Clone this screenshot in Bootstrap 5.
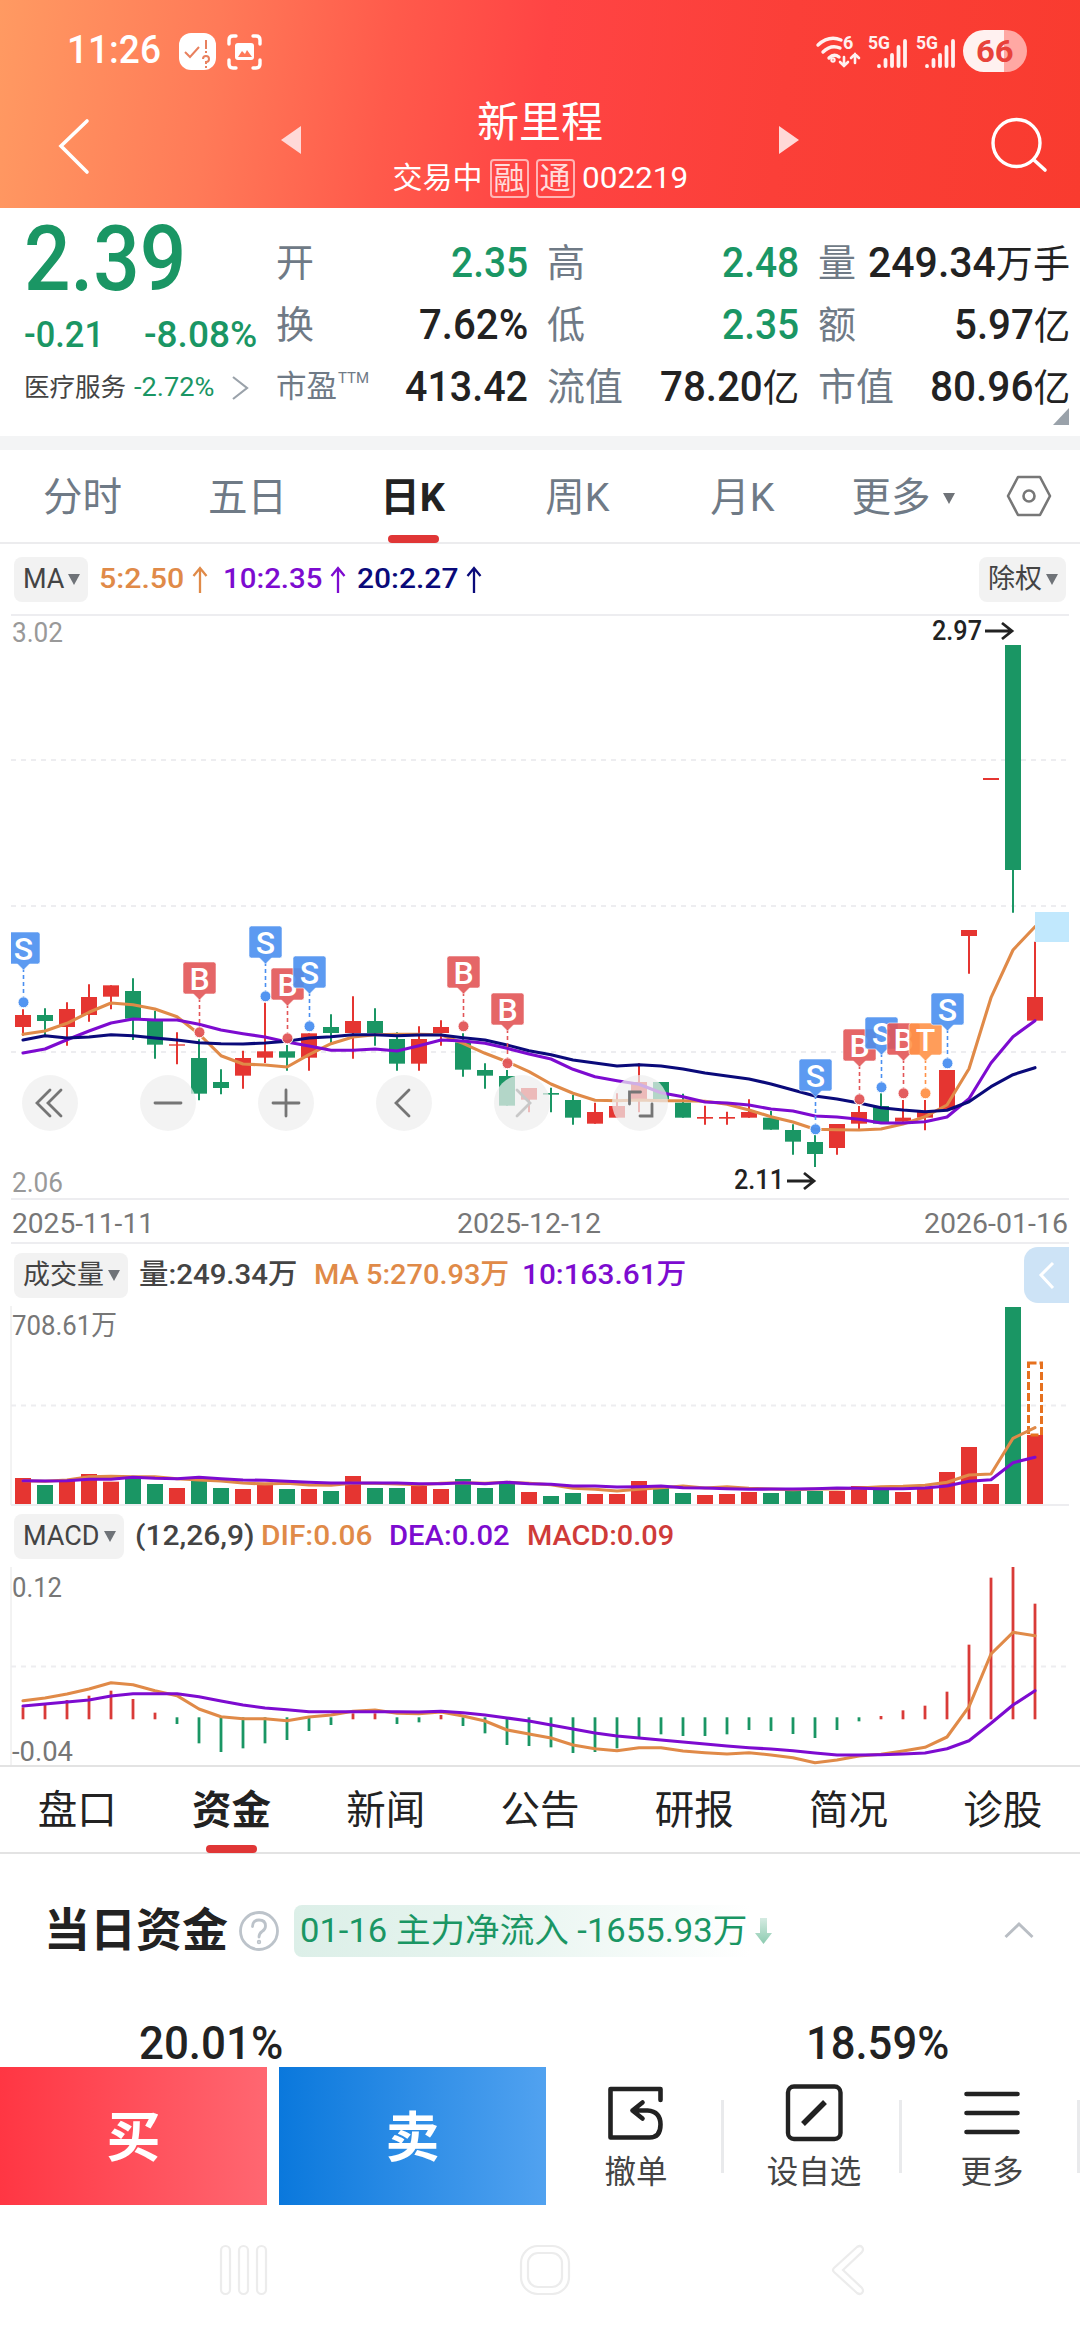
<!DOCTYPE html>
<html lang="zh-CN">
<head>
<meta charset="utf-8">
<meta name="viewport" content="width=device-width, initial-scale=1">
<title>新里程 002219</title>
<link href="https://cdn.jsdelivr.net/npm/bootstrap@5.3.0/dist/css/bootstrap.min.css" rel="stylesheet">
<style>
:root{--up:#e53531;--down:#1a9664;--ink:#222;--slate:#6f7a86;--ma5:#e08a48;--ma10:#7d0bd0;--ma20:#0a0a7a}
body{width:1080px;height:2340px;overflow:hidden;background:#fff;color:var(--ink);font-family:Roboto,"Noto Sans CJK SC",sans-serif;line-height:1}
svg{display:block;flex:none}
.fit{display:inline-block;white-space:nowrap;flex:none}
.fit>span{display:inline-block;transform-origin:0 50%}
.t-down{color:var(--down)}.t-up{color:#cf3b39}.t-slate{color:var(--slate)}
.t-5{color:var(--ma5)}.t-10{color:var(--ma10)}.t-20{color:var(--ma20)}
.topbar{height:208px;background:linear-gradient(97deg,#ff9a62 0%,#ff7a58 20%,#ff5a4b 36%,#ff4444 50%,#fb3f38 72%,#f93b2f 100%);color:#fff}
.status{height:101px;padding:0 53px 0 67px}
.clock{font-size:39px;font-weight:500}
.battery{width:64px;height:42px;border-radius:21px;background:linear-gradient(90deg,#fff1f0 64%,#ffa8a3 64%);color:#e8423b;font-size:32px;font-weight:700;margin-left:6px}
.titlebar{height:107px}
.side{width:340px}
.stock{font-size:42px;line-height:44px}
.substock{font-size:30px;height:40px;margin-top:13px;gap:7px}
.boxed{width:39px;height:39px;border:2px solid rgba(255,255,255,.6);border-radius:4px;font-size:31px;color:rgba(255,255,255,.82);line-height:35px;text-align:center}
.quote{height:228px;padding:16px 10px 0 24px}
.big{font-size:91px;font-weight:500;line-height:70px;height:70px}
.chg{font-size:37px;font-weight:500;height:37px;margin-top:22px}
.chg .pct{margin-left:40px}
.sector{font-size:25.5px;height:30px;margin-top:20px;color:#444}
.sector svg{margin-left:17px}
.summary{width:252px}
.grid3{column-gap:19px;padding-top:8px}
.qcol{width:252px}
.qrow{height:62px;font-size:38px}
.qrow .v{font-size:42px;font-weight:500}
.v i{font-style:normal;font-size:38px;font-weight:400}
.pe-ttm{font-size:30.5px}.pe-ttm sup{font-size:15px;top:-.9em;margin-left:1px}
.strip{height:14px;background:#f3f4f5}
.tabs{height:94px;border-bottom:2px solid #ececee;font-size:39.5px;color:var(--slate)}
.tabcell{width:165px;position:relative;padding-top:4px}
.tabcell.more{padding-right:9px;gap:12px}
.on{color:var(--ink);font-weight:700}
.on::after{content:"";position:absolute;bottom:-1px;left:50%;margin-left:-25px;width:51px;height:8px;border-radius:4px;background:#e03636}
.tri{width:0;height:0;border:6.5px solid transparent;border-top:11px solid #6f7378;border-bottom:0}
.legend-row{font-size:28.5px;padding:0 14px;height:62px}
.legend-row.ma{height:70px}
.legend-row.osc{height:61px}
.chip{height:45px;border-radius:8px;background:#f2f2f2;color:#444;font-size:27px;padding:0 8px 0 9px;gap:4px}
.lg{font-weight:500}
.lg.dark{color:#444}
.arr{color:var(--ma5);overflow:visible}.arr.t-10{color:var(--ma10)}.arr.t-20{color:var(--ma20)}
.g1{margin-left:11px}.g2{margin-left:17px}.g3{margin-left:13px}.g4{margin-left:6px}
.peek{position:absolute;right:11px;top:3px;width:45px;height:56px;border-radius:14px 0 0 14px;background:#cde3f6}
.tabs2{height:87px;border-bottom:2px solid #e3e3e3;font-size:39.5px}
.tabs2 .tabcell{width:14.2857%;padding-top:2px}
.fund{height:149px;padding:4px 46px 0 44px}
.fund h2{font-size:46px;font-weight:700;margin:0;width:184px;white-space:nowrap}
.help{margin-left:11px}
.flow{height:52px;margin-left:15px;padding-left:6px;border-radius:8px;font-size:33.5px;width:480px;background:linear-gradient(90deg,#dcefe8 0%,#e8f5f0 45%,#fff 95%)}
.shares{height:64px;font-size:46px;font-weight:500;color:#222;padding:17px 131px 0 139px}
.trade{height:138px}
.btn-trade{width:267px;border:0;border-radius:0;color:#fff!important;font-size:54px;font-weight:700;padding:5px 0 0}
.buy{background:linear-gradient(90deg,#ff3643,#ff6771)}
.sell{background:linear-gradient(90deg,#0a78dc,#51a2f0);margin-left:12px}
.act{width:178px;font-size:31.5px;color:#444;position:relative;padding-left:2px}
.act::after{content:"";position:absolute;right:0;top:33px;width:3px;height:73px;background:#e9eaec}
.act svg{margin-top:14px}
.act span{margin-top:14px}
.sysnav{height:135px}
</style>
</head>
<body>
<header class="topbar">
  <div class="status d-flex align-items-center">
    <span class="fit clock" data-w="94">11:26</span>
    <svg class="ms-3" width="88" height="40" viewBox="176 31 88 40" fill="none" stroke="#fff">
      <rect x="178" y="33" width="37" height="37" rx="12" fill="#fff" stroke="none"/>
      <path d="M184 52l5 5 9-10" stroke="#e8805e" stroke-width="2"/>
      <path d="M205 40v9m0 2v2M202 59q0-3 3-3t3 3-3 3v2m0 2v2" stroke="#e8805e" stroke-width="2"/>
      <path d="M235 36h-3q-4 0-4 4v4M252 36h3q4 0 4 4v4M235 68h-3q-4 0-4-4v-4M252 68h3q4 0 4-4v-4" stroke-width="3.4" stroke-linecap="round"/>
      <rect x="234" y="43" width="19" height="17" rx="3" fill="#fff" stroke="none"/>
      <path d="M237 57l4-6 3 3 2-4 5 7z" fill="#ff7b5a" stroke="none"/>
    </svg>
    <svg class="ms-auto" width="144" height="42" viewBox="812 29 144 42" fill="none" stroke="#fff1f0" stroke-width="3.4" stroke-linecap="round">
      <path d="M817 44q11-10 23-5M822 51q8-8 17-4M828 57q5-5 10-1"/>
      <circle cx="832" cy="59" r="1"/>
      <text x="842" y="48" font-size="18" font-weight="700" fill="#fff1f0" stroke="none">6</text>
      <path d="M843 56v9m-4-4l4 4 4-4M854 62v-9m-4 4l4-4 4 4" stroke-width="2.6"/>
      <g id="sig"><text x="867" y="48" font-size="18" font-weight="700" fill="#fff1f0" stroke="none" textLength="22" lengthAdjust="spacingAndGlyphs">5G</text>
      <path d="M878 65v.2M884.5 59v6M891 54v11M897.500 46v19M904 40v25" stroke-width="3.8"/></g>
      <use href="#sig" x="48"/>
    </svg>
    <div class="battery d-flex align-items-center justify-content-center"><span class="fit" data-w="38">66</span></div>
  </div>
  <div class="titlebar d-flex">
    <div class="side d-flex">
      <svg width="340" height="107" viewBox="0 101 340 107"><path d="M87 121L61 146l26 26" fill="none" stroke="#fff" stroke-width="3.6" stroke-linecap="round"/><path d="M301 126v28l-20-14z" fill="#ffd9d8"/></svg>
    </div>
    <div class="flex-fill d-flex flex-column align-items-center">
      <div class="stock">新里程</div>
      <div class="substock d-flex align-items-center"><span>交易中</span><span class="boxed">融</span><span class="boxed">通</span><span class="fit" data-w="106">002219</span></div>
    </div>
    <div class="side d-flex">
      <svg width="340" height="107" viewBox="740 101 340 107"><path d="M779 126v28l20-14z" fill="#ffd9d8"/><circle cx="1016.5" cy="143" r="23.5" fill="none" stroke="#fff" stroke-width="3.4"/><path d="M1034 160l11 10" stroke="#fff" stroke-width="3.6" stroke-linecap="round"/></svg>
    </div>
  </div>
</header>

<section class="quote d-flex position-relative">
  <div class="summary t-down">
    <div class="big"><span class="fit" data-w="162">2.39</span></div>
    <div class="chg d-flex"><span class="fit" data-w="80">-0.21</span><span class="fit pct" data-w="113">-8.08%</span></div>
    <div class="sector d-flex align-items-center">医疗服务<span class="fit t-down ms-2" data-w="80">-2.72%</span>
      <svg width="20" height="26" viewBox="0 0 20 26"><path d="M2 2l14 11L2 24" fill="none" stroke="#9aa2aa" stroke-width="2.2"/></svg></div>
  </div>
  <div class="grid3 d-flex">
    <div class="qcol">
      <div class="qrow d-flex align-items-center justify-content-between"><span class="t-slate">开</span><span class="fit v t-down" data-w="77">2.35</span></div>
      <div class="qrow d-flex align-items-center justify-content-between"><span class="t-slate">换</span><span class="fit v" data-w="109">7.62%</span></div>
      <div class="qrow d-flex align-items-center justify-content-between"><span class="t-slate pe-ttm">市盈<sup>TTM</sup></span><span class="fit v" data-w="123">413.42</span></div>
    </div>
    <div class="qcol">
      <div class="qrow d-flex align-items-center justify-content-between"><span class="t-slate">高</span><span class="fit v t-down" data-w="77">2.48</span></div>
      <div class="qrow d-flex align-items-center justify-content-between"><span class="t-slate">低</span><span class="fit v t-down" data-w="77">2.35</span></div>
      <div class="qrow d-flex align-items-center justify-content-between"><span class="t-slate">流值</span><span class="fit v" data-w="139">78.20<i>亿</i></span></div>
    </div>
    <div class="qcol">
      <div class="qrow d-flex align-items-center justify-content-between"><span class="t-slate">量</span><span class="fit v" data-w="202">249.34<i>万手</i></span></div>
      <div class="qrow d-flex align-items-center justify-content-between"><span class="t-slate">额</span><span class="fit v" data-w="116">5.97<i>亿</i></span></div>
      <div class="qrow d-flex align-items-center justify-content-between"><span class="t-slate">市值</span><span class="fit v" data-w="140">80.96<i>亿</i></span></div>
    </div>
  </div>
  <svg class="position-absolute bottom-0 end-0" width="28" height="28" viewBox="0 0 28 28"><path d="M17 0v17H1z" fill="#9aa2aa"/></svg>
</section>
<div class="strip"></div>

<nav class="tabs d-flex">
  <div class="tabcell d-flex align-items-center justify-content-center">分时</div>
  <div class="tabcell d-flex align-items-center justify-content-center">五日</div>
  <div class="tabcell on d-flex align-items-center justify-content-center">日K</div>
  <div class="tabcell d-flex align-items-center justify-content-center">周K</div>
  <div class="tabcell d-flex align-items-center justify-content-center">月K</div>
  <div class="tabcell more d-flex align-items-center justify-content-center">更多<i class="tri"></i></div>
  <div class="d-flex align-items-center ms-3"><svg width="46" height="42" viewBox="0 0 46 42" fill="none" stroke="#777" stroke-width="2.6"><path d="M12 2h22l10 19-10 19H12L2 21z" stroke-linejoin="round"/><circle cx="23" cy="21" r="5.5"/></svg></div>
</nav>

<svg width="0" height="0" class="position-absolute"><defs><path id="up" d="M16 29V4m-6.500 8l6.500-8 6.500 8" fill="none" stroke="currentColor" stroke-width="2.300"/></defs></svg>
<div class="legend-row ma d-flex align-items-center">
  <div class="chip d-flex align-items-center"><span class="fit" data-w="41">MA</span><i class="tri"></i></div>
  <span class="fit lg t-5 g1" data-w="85">5:2.50</span><svg class="arr" width="22" height="30"><use href="#up"/></svg>
  <span class="fit lg t-10 g2" data-w="99">10:2.35</span><svg class="arr t-10" width="22" height="30"><use href="#up"/></svg>
  <span class="fit lg t-20 g3" data-w="101">20:2.27</span><svg class="arr t-20" width="22" height="30"><use href="#up"/></svg>
  <div class="chip d-flex align-items-center ms-auto">除权<i class="tri"></i></div>
</div>

<svg id="kline" width="1080" height="630" viewBox="0 614 1080 630"></svg>

<div class="legend-row d-flex align-items-center position-relative">
  <div class="chip d-flex align-items-center">成交量<i class="tri"></i></div>
  <span class="fit lg dark g1" data-w="158">量:249.34万</span>
  <span class="fit lg t-5 g2" data-w="195">MA 5:270.93万</span>
  <span class="fit lg t-10 g3" data-w="164">10:163.61万</span>
  <div class="peek"><svg width="45" height="56"><path d="M29 16L17 28l12 13" fill="none" stroke="#fff" stroke-width="3"/></svg></div>
</div>
<svg id="volume" width="1080" height="200" viewBox="0 1306 1080 200"></svg>

<div class="legend-row osc d-flex align-items-center">
  <div class="chip d-flex align-items-center"><span class="fit" data-w="77">MACD</span><i class="tri"></i></div>
  <span class="fit lg dark g1" data-w="120">(12,26,9)</span>
  <span class="fit lg t-5 g4" data-w="111">DIF:0.06</span>
  <span class="fit lg t-10 g2" data-w="121">DEA:0.02</span>
  <span class="fit lg t-up g2" data-w="147">MACD:0.09</span>
</div>
<svg id="macd" width="1080" height="200" viewBox="0 1567 1080 200"></svg>

<nav class="tabs2 d-flex">
  <div class="tabcell d-flex align-items-center justify-content-center">盘口</div>
  <div class="tabcell on d-flex align-items-center justify-content-center">资金</div>
  <div class="tabcell d-flex align-items-center justify-content-center">新闻</div>
  <div class="tabcell d-flex align-items-center justify-content-center">公告</div>
  <div class="tabcell d-flex align-items-center justify-content-center">研报</div>
  <div class="tabcell d-flex align-items-center justify-content-center">简况</div>
  <div class="tabcell d-flex align-items-center justify-content-center">诊股</div>
</nav>

<section class="fund d-flex align-items-center">
  <h2>当日资金</h2>
  <svg class="help" width="40" height="40" viewBox="0 0 40 40" fill="none" stroke="#bcc3ca" stroke-width="2.8"><circle cx="20" cy="20" r="18.5"/><path d="M13.500 15.500q0-6.500 6.500-6.500t6.500 6q0 3.500-3.500 5.500-3 2-3 5.500" stroke-linecap="round"/><circle cx="20" cy="31" r=".8"/></svg>
  <div class="flow d-flex align-items-center t-down"><span class="fit" data-w="447">01-16 主力净流入 -1655.93万</span>
    <svg width="18" height="28" viewBox="0 0 18 28" class="ms-2"><defs><linearGradient id="ga" x2="0" y2="1"><stop stop-color="#d5ebe2"/><stop offset="1" stop-color="#8ccbb0"/></linearGradient></defs><path d="M5 1h7v15h5L8.500 27 0 16h5z" fill="url(#ga)"/></svg></div>
  <svg class="ms-auto" width="30" height="20" viewBox="0 0 30 20"><path d="M1.500 16L15 3l13.500 13" fill="none" stroke="#b9bec4" stroke-width="3"/></svg>
</section>
<div class="shares d-flex justify-content-between"><span class="fit" data-w="144">20.01%</span><span class="fit" data-w="143">18.59%</span></div>

<footer class="trade d-flex">
  <button class="btn btn-trade buy">买</button>
  <button class="btn btn-trade sell">卖</button>
  <div class="act d-flex flex-column align-items-center">
    <svg width="60" height="62" viewBox="607 2081 60 62" fill="none" stroke="#222" stroke-width="4.6" stroke-linejoin="round" stroke-linecap="round"><path d="M661.500 2100v-11h-50v48.500h39q11 0 11-13t-13-14h-15m10-8l-10 8 10 8"/></svg><span>撤单</span></div>
  <div class="act d-flex flex-column align-items-center">
    <svg width="60" height="62" viewBox="783 2081 60 62" fill="none" stroke="#222"><rect x="787" y="2086.5" width="52.5" height="52.5" rx="6" stroke-width="4.4"/><path d="M802 2124l22-22" stroke-width="5.4"/></svg><span>设自选</span></div>
  <div class="act d-flex flex-column align-items-center">
    <svg width="60" height="62" viewBox="961 2081 60 62" stroke="#222" stroke-width="4.6" stroke-linecap="round"><path d="M965.500 2094h51M965.500 2113h51M965.500 2132h51"/></svg><span>更多</span></div>
</footer>
<div class="sysnav">
  <svg width="1080" height="135" viewBox="0 2205 1080 135" fill="none" stroke="#ececec" stroke-width="2.2">
    <rect x="221" y="2246" width="9" height="48" rx="4.500"/><rect x="239" y="2246" width="9" height="48" rx="4.500"/><rect x="257" y="2246" width="9" height="48" rx="4.500"/>
    <rect x="521" y="2246" width="48" height="48" rx="17"/><rect x="528" y="2253" width="34" height="34" rx="10"/>
    <path d="M857 2247L834 2268q-2 2 0 4l23 21q3 2 5 0t0-5l-19-18 19-18q2-3 0-5t-5 0z"/>
  </svg>
</div>

<script src="https://cdn.jsdelivr.net/npm/bootstrap@5.3.0/dist/js/bootstrap.bundle.min.js"></script>
<script>
document.querySelectorAll('.fit').forEach(function (el) {
  var s = document.createElement('span');
  while (el.firstChild) s.appendChild(el.firstChild);
  el.appendChild(s);
  var w = +el.dataset.w, n = s.offsetWidth;
  s.style.transform = 'scaleX(' + w / n + ')';
  el.style.width = w + 'px';
  s.style.marginRight = (w - n) + 'px';
});
var UP = '#e53531', DN = '#1a9664', X = function (i) { return 23 + i * 22; };
function line(d, base, c) {
  return '<polyline fill="none" stroke="' + c + '" stroke-width="3.1" stroke-linejoin="round" stroke-linecap="round" points="' +
    d.map(function (v, i) { return X(i) + ',' + (base + v / 3).toFixed(1); }).join(' ') + '"/>';
}
function hline(y, x1, x2, dash, c) {
  return '<path d="M' + x1 + ' ' + y + 'H' + x2 + '" stroke="' + (c || '#ededf0') + '" stroke-width="2"' + (dash ? ' stroke-dasharray="5 5"' : '') + '/>';
}
function label(t, x, y, w, c, wt) {
  return '<text x="' + x + '" y="' + y + '" font-size="28" font-weight="' + (wt || 400) + '" fill="' + c + '" textLength="' + w + '" lengthAdjust="spacingAndGlyphs">' + t + '</text>';
}
var C5 = '#e08a48', C10 = '#7d0bd0', C20 = '#0a0a7a';

// Daily candles: colour, body top, body bottom, wick top, wick bottom
var K = 'r405,441,388,467 g405,423,385,467 r387,441,367,497 r351,405,313,425 r316,350,316,388 g333,416,295,480 g423,494,392,536 r493,497,457,553 g534,641,478,661 g606,624,568,643 r534,587,512,626 r514,533,368,549 g514,533,495,572 r460,533,460,572 g441,459,403,490 r423,459,349,536 g423,459,385,497 g477,551,457,572 r477,551,439,572 r441,459,421,497 g487,569,460,590 g570,587,550,626 g588,677,570,677 r624,659,624,697 g639,644,623,697 g660,713,645,734 r696,731,668,731 r678,713,640,713 r606,658,550,697 g606,658,606,658 g668,713,641,713 r711,716,677,734 r711,716,695,734 r696,713,658,713 g713,749,693,749 g750,785,733,824 g786,822,765,861 r732,804,732,824 r696,731,678,749 g678,731,640,731 r713,725,660,725 r696,713,660,751 r570,689,570,689 r150,168,150,281 r-306,-300,-306,-300 g-705,-30,-705,98 r351,422,185,422'.split(' ');
var s = hline(615, 11, 1069) + hline(760, 11, 1069, 1) + hline(906, 11, 1069, 1) + hline(1052, 11, 1069, 1) + hline(1199, 11, 1069) + hline(1243, 11, 1069);
K.forEach(function (k, i) {
  var c = k[0] === 'r' ? UP : DN, v = k.slice(1).split(',').map(function (n) { return 880 + n / 3; });
  s += '<path d="M' + X(i) + ' ' + v[2] + 'V' + v[3] + '" stroke="' + c + '" stroke-width="2"/><rect x="' + (X(i) - 8) + '" y="' + v[0] + '" width="16" height="' + (v[1] - v[0]) + '" fill="' + c + '"/>';
});
s += line([463,453,430,397,369,374,387,410,462,527,552,555,561,524,491,471,464,463,463,464,490,520,545,575,612,640,661,662,660,662,662,664,673,690,710,726,748,749,750,747,732,710,675,566,353,210,140], 880, C5);
s += line([519,507,479,453,429,417,420,420,433,450,461,471,486,498,511,511,507,513,497,480,483,490,505,522,537,568,590,602,613,638,650,666,669,675,687,693,708,711,718,729,729,725,711,656,549,470,422], 880, C10);
s += line([480,467,474,471,464,467,474,480,488,491,492,489,484,474,470,464,464,467,465,465,473,480,495,512,524,540,549,558,554,558,567,579,588,597,612,630,648,657,669,683,690,695,691,665,620,584,563], 880, C20);
// Trade markers
s += '<clipPath id="plot"><path d="M11 614h1058v630H11z"/></clipPath><g clip-path="url(#plot)">';
[['S',0,156],['B',8,246],['S',11,138],['B',12,264],['S',13,228],['B',20,228],['B',22,339],['S',36,537],['B',38,447],['S',39,411],['B',40,429],['T',41,429],['S',42,339]].forEach(function (m) {
  var c = {S:'#4a8ff0', B:'#e25557', T:'#ff9248'}[m[0]], x = X(m[1]) + .5, y = 880 + m[2] / 3;
  s += '<g><path d="M' + x + ' ' + (y + 36) + 'v30" stroke="' + c + '" stroke-width="1.6" stroke-dasharray="4 3"/>' +
    '<circle cx="' + x + '" cy="' + (y + 70.3) + '" r="5.5" fill="' + c + '" stroke="#fff" stroke-width="1" fill-opacity=".95"/>' +
    '<path d="M' + (x - 14) + ' ' + y + 'h28q2.500 0 2.500 2.500v27q0 2.500-2.500 2.500h-8l-6 6-6-6h-8q-2.500 0-2.500-2.500v-27q0-2.500 2.500-2.500z" fill="' + c + '" fill-opacity=".9" stroke="#fff" stroke-opacity=".7" stroke-width=".8"/>' +
    '<text x="' + x + '" y="' + (y + 27.5) + '" font-size="32" text-anchor="middle" font-weight="500" fill="#fff">' + m[0] + '</text></g>';
});
s += '</g>';
// Pan and zoom controls
[50,168,286,404,522,640].forEach(function (x, i) {
  var p = ['M50 1090l-13 13 13 13M61 1090l-13 13 13 13','M155 1103h26','M273 1103h26M286 1090v26','M409 1090l-13 13 13 13','M517 1090l13 13-13 13','M629.500 1104v-12h11M652 1104v12h-12'][i];
  s += '<circle cx="' + x + '" cy="1103" r="28" fill="#efefef" fill-opacity=".72"/><path d="' + p + '" fill="none" stroke="' + (i === 4 ? '#c8c8c8' : '#757575') + '" stroke-width="2.8" stroke-linecap="round"/>';
});
s += '<rect x="1035" y="912" width="34" height="30" fill="#c1e8fd"/>';
var AR = ' fill="none" stroke="#222" stroke-width="2.8"/>';
s += label('2.97', 932, 640, 50, '#222', 500) + '<path d="M985 631h26m-9-8l10 8-10 8"' + AR + label('2.11', 734, 1189, 50, '#222', 500) + '<path d="M787 1181h26m-9-8l10 8-10 8"' + AR;
s += label('3.02', 12, 642, 51, '#999') + label('2.06', 12, 1192, 51, '#999') + label('2025-11-11', 12, 1233, 142, '#777') + label('2025-12-12', 457, 1233, 144, '#777') + label('2026-01-16', 924, 1233, 144, '#777');
document.getElementById('kline').innerHTML = s;

// Turnover bars
var V = 'r744 g765 r752 r732 r755 g742 g762 r774 g750 g774 r777 r758 g777 r777 g783 r738 g774 g774 r768 r777 g747 g774 g762 r786 g798 g789 r792 r792 r753 g774 g789 r795 r792 r786 g789 g783 g783 r783 r768 g778 r786 r774 r726 r651 r762 g231 r615'.split(' ');
s = '<path d="M11 1306v199" stroke="#e6e6e6" stroke-width="1"/>' + hline(1405.5, 11, 1069, 1) + hline(1505, 11, 1069);
V.forEach(function (k, i) {
  var y = 1230 + k.slice(1) / 3;
  s += '<rect x="' + (X(i) - 8) + '" y="' + y + '" width="16" height="' + (1504 - y) + '" fill="' + (k[0] === 'r' ? UP : DN) + '"/>';
});
s += '<rect x="1028.5" y="1363" width="13" height="72" fill="none" stroke="#e6711f" stroke-width="3" stroke-dasharray="8 3"/>';
s += line([752,754,750,740,739,740,740,746,750,753,759,762,760,765,766,760,760,762,764,760,758,760,757,760,764,775,778,783,778,773,768,774,770,775,777,779,777,777,774,770,769,766,757,735,732,625,593], 1230, C5);
s += line([752,753,752,748,748,742,745,746,742,746,750,751,754,757,759,759,759,759,761,761,758,761,757,761,763,768,768,771,770,768,773,774,776,778,777,777,776,774,775,776,776,774,768,754,749,698,682], 1230, C10);
s += label('708.61万', 12, 1335, 105, '#777');
document.getElementById('volume').innerHTML = s;

// MACD histogram
var M = 'r622 r610 r600 r587 r572 r597 r638 g672 g730 g756 g745 g730 g720 g693 g675 r640 r640 g672 g667 r645 g678 g700 g735 g738 g742 g759 g756 g745 g712 g703 g708 g708 g703 g690 g693 g702 g714 g690 g664 r648 r631 r617 r575 r434 r233 r201 r311'.split(' ');
s = '<path d="M11 1567v199" stroke="#e6e6e6" stroke-width="1"/>' + hline(1666.5, 11, 1069, 1) + hline(1766, 0, 1080, 0, '#e3e3e3');
M.forEach(function (k, i) {
  s += '<path d="M' + X(i) + ' ' + (k[0] === 'r' ? 1719.3 : 1717.3) + 'V' + (1500 + k.slice(1) / 3) + '" stroke="' + (k[0] === 'r' ? '#d93b38' : DN) + '" stroke-width="2.8"/>';
});
s += line([602,594,582,567,548,554,572,587,627,650,656,656,662,651,645,634,630,640,641,636,648,663,690,702,714,735,746,752,743,743,753,758,762,758,765,773,788,780,768,763,753,742,711,620,462,397,407], 1500, C5);
s += line([618,612,606,600,588,581,581,581,590,603,615,624,629,635,635,635,635,635,636,634,638,645,654,663,675,687,699,708,714,720,726,732,738,743,747,752,759,765,765,764,762,759,746,722,670,615,572], 1500, C10);
s += label('0.12', 12, 1597, 50, '#777') + label('-0.04', 12, 1761, 61, '#777');
document.getElementById('macd').innerHTML = s;
</script>
</body>
</html>
